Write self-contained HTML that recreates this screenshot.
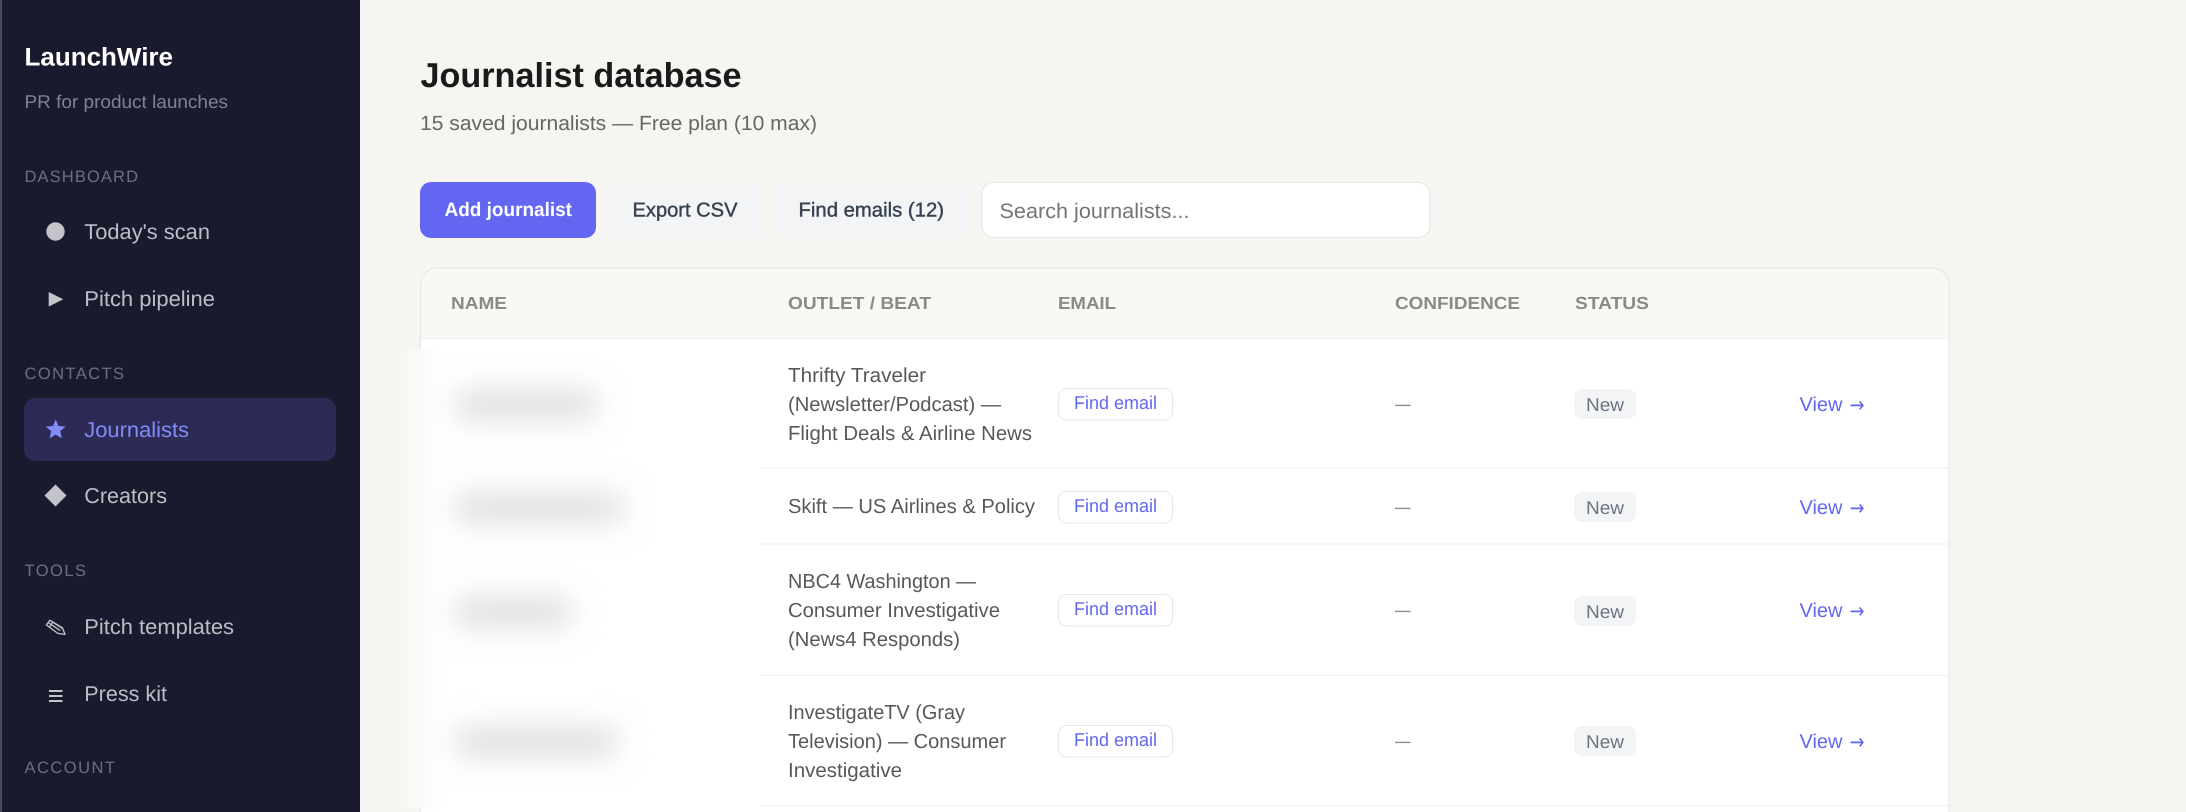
<!DOCTYPE html>
<html lang="en">
<head>
<meta charset="utf-8">
<title>Journalist database — LaunchWire</title>
<style>
html,body{margin:0;padding:0;width:2186px;height:812px;overflow:hidden;background:#f5f5f1}
svg{display:block;position:absolute;left:0;top:0}
text{font-family:"Liberation Sans",Arial,sans-serif;text-rendering:geometricPrecision;white-space:pre}
.nav{font-size:21.5px;fill:#bdbdc4}
.sec{font-size:16.5px;fill:#6f6f7c}
.th{font-size:17.5px;font-weight:700;fill:#8a8a88}
.td{font-size:20.3px;fill:#585858}
.fe{font-size:18.5px;fill:#6366f1}
.bd{font-size:18.5px;fill:#6b7280}
.vw{font-size:20px;fill:#6366f1}
.ar{font-size:21px;fill:#6366f1;font-family:"DejaVu Sans",sans-serif}
.ds{font-size:20px;fill:#8a8a8a}
.bt{font-size:20px;fill:#374151;stroke:#374151;stroke-width:.4}
.pill{fill:#fff;stroke:#e8e8e8;stroke-width:1.1}
.bdg{fill:#f3f4f6}
</style>
</head>
<body>
<svg width="2186" height="812" viewBox="0 0 2186 812" xmlns="http://www.w3.org/2000/svg">
<defs>
<filter id="b" x="-40%" y="-150%" width="180%" height="400%"><feGaussianBlur stdDeviation="15"/></filter>
<linearGradient id="fade" gradientUnits="userSpaceOnUse" x1="392" y1="0" x2="445" y2="0">
<stop offset="0" stop-color="#f5f5f1"/><stop offset="1" stop-color="#fff"/>
</linearGradient>
<clipPath id="cp"><rect x="370" y="350" width="390" height="459"/></clipPath>
</defs>

<!-- page -->
<rect width="2186" height="812" fill="#f5f5f1"/>

<!-- sidebar -->
<rect x="0" y="0" width="360" height="812" fill="#1a1a2e"/>
<rect x="0" y="0" width="2" height="812" fill="#4b4b5a"/>
<text x="24.5" y="65.5" font-size="25.5" font-weight="700" fill="#fff" textLength="148.5" lengthAdjust="spacingAndGlyphs">LaunchWire</text>
<text x="24.5" y="108" font-size="18.5" fill="#82828e" textLength="203.5" lengthAdjust="spacingAndGlyphs">PR for product launches</text>

<text class="sec" x="24.5" y="182" textLength="113.5" lengthAdjust="spacing">DASHBOARD</text>
<circle cx="55.5" cy="231.5" r="9.2" fill="#c3c3ca"/>
<text class="nav" x="84.3" y="239" textLength="125.7" lengthAdjust="spacingAndGlyphs">Today's scan</text>
<path d="M48.7 292 L63.3 299.2 L48.7 306.6 Z" fill="#c3c3ca"/>
<text class="nav" x="84.3" y="306" textLength="130.7" lengthAdjust="spacingAndGlyphs">Pitch pipeline</text>

<text class="sec" x="24.5" y="379" textLength="99.5" lengthAdjust="spacing">CONTACTS</text>
<rect x="24" y="398" width="312" height="63" rx="12" fill="#2d2b55"/>
<path d="M55.7 419.5 L58.5 426 L65.6 426.6 L60.2 431.3 L61.9 438.4 L55.7 434.6 L49.5 438.4 L51.2 431.3 L45.8 426.6 L52.9 426 Z" fill="#818cf8"/>
<text x="84.3" y="437" font-size="21.5" fill="#818cf8" textLength="104.7" lengthAdjust="spacingAndGlyphs">Journalists</text>
<path d="M55.5 484.5 L66.5 495.5 L55.5 506.5 L44.5 495.5 Z" fill="#c3c3ca"/>
<text class="nav" x="84.3" y="503" textLength="82.7" lengthAdjust="spacingAndGlyphs">Creators</text>

<text class="sec" x="24.5" y="576" textLength="61.5" lengthAdjust="spacing">TOOLS</text>
<g fill="none" stroke="#c3c3ca" stroke-width="1.3" stroke-linejoin="round">
<path d="M46.4 625 L49.8 620.2 L62.4 627.8 L65 634.4 L57.8 633.4 Z"/>
<path d="M48.2 622.6 L60.2 630.6 M51.8 621.4 L63 628.8 M49.6 626.8 L52.6 622.2"/>
</g>
<text class="nav" x="84.3" y="634" textLength="149.7" lengthAdjust="spacingAndGlyphs">Pitch templates</text>
<path d="M49 691 H62.5 M49 696 H62.5 M49 701 H62.5" stroke="#c3c3ca" stroke-width="2" fill="none"/>
<text class="nav" x="84.3" y="701" textLength="82.7" lengthAdjust="spacingAndGlyphs">Press kit</text>
<text class="sec" x="24.5" y="773" textLength="90.5" lengthAdjust="spacing">ACCOUNT</text>

<!-- header -->
<text x="420.5" y="87" font-size="34.5" font-weight="700" fill="#1a1a1a" textLength="321" lengthAdjust="spacingAndGlyphs">Journalist database</text>
<text x="420" y="130" font-size="20.5" fill="#666" textLength="397" lengthAdjust="spacingAndGlyphs">15 saved journalists — Free plan (10 max)</text>

<!-- toolbar -->
<rect x="420" y="182" width="176" height="56" rx="11" fill="#6366f1"/>
<text x="444.5" y="216" font-size="19.5" font-weight="700" fill="#fff" textLength="127.5" lengthAdjust="spacingAndGlyphs">Add journalist</text>
<rect x="610" y="182" width="152" height="56" rx="11" fill="#f3f4f6"/>
<text class="bt" x="632.5" y="216.5" textLength="105" lengthAdjust="spacingAndGlyphs">Export CSV</text>
<rect x="775" y="182" width="192" height="56" rx="11" fill="#f3f4f6"/>
<text class="bt" x="798.5" y="216.5" textLength="145.5" lengthAdjust="spacingAndGlyphs">Find emails (12)</text>
<rect x="981.5" y="182.5" width="448.5" height="55" rx="12" fill="#fff" stroke="#e6e6e6" stroke-width="1.1"/>
<text x="999.5" y="218" font-size="21" fill="#757575" textLength="190" lengthAdjust="spacingAndGlyphs">Search journalists...</text>

<!-- table card -->
<path d="M421 338 V285 a16.5 16.5 0 0 1 16.5 -16.5 H1932 a16.5 16.5 0 0 1 16.5 16.5 V338 Z" fill="#f8f8f4"/>
<rect x="421" y="338" width="1527.5" height="474" fill="#fff"/>
<path d="M420.5 812 V285 a17 17 0 0 1 17 -17 H1932 a17 17 0 0 1 17 17 V812" fill="none" stroke="#e8e8e4" stroke-width="1.2"/>
<path d="M421 338.5 H1948.5" stroke="#f0f0ee" stroke-width="1"/>

<text class="th" x="451" y="309" textLength="56" lengthAdjust="spacingAndGlyphs">NAME</text>
<text class="th" x="788" y="309" textLength="143" lengthAdjust="spacingAndGlyphs">OUTLET / BEAT</text>
<text class="th" x="1058" y="309" textLength="58" lengthAdjust="spacingAndGlyphs">EMAIL</text>
<text class="th" x="1395" y="309" textLength="125" lengthAdjust="spacingAndGlyphs">CONFIDENCE</text>
<text class="th" x="1575" y="309" textLength="74" lengthAdjust="spacingAndGlyphs">STATUS</text>

<!-- row separators -->
<path d="M421 468 H1948.5 M421 544 H1948.5 M421 675.5 H1948.5 M421 805.5 H1948.5" stroke="#f1f1f1" stroke-width="1.2"/>

<!-- row 1 -->
<text class="td" x="788" y="381.8" textLength="138" lengthAdjust="spacingAndGlyphs">Thrifty Traveler</text>
<text class="td" x="788" y="410.8" textLength="213" lengthAdjust="spacingAndGlyphs">(Newsletter/Podcast) —</text>
<text class="td" x="788" y="439.8" textLength="244" lengthAdjust="spacingAndGlyphs">Flight Deals &amp; Airline News</text>
<rect class="pill" x="1058.5" y="388.5" width="114" height="31.5" rx="8"/>
<text class="fe" x="1074" y="409" textLength="83" lengthAdjust="spacingAndGlyphs">Find email</text>
<text class="ds" x="1395" y="410.5" textLength="15.5" lengthAdjust="spacingAndGlyphs">—</text>
<rect class="bdg" x="1574" y="389" width="62" height="30" rx="8"/>
<text class="bd" x="1586" y="411" textLength="38" lengthAdjust="spacingAndGlyphs">New</text>
<text class="vw" x="1799.5" y="411" textLength="43" lengthAdjust="spacingAndGlyphs">View</text>
<text class="ar" x="1849.5" y="412" textLength="15" lengthAdjust="spacingAndGlyphs">→</text>

<!-- row 2 -->
<text class="td" x="788" y="513" textLength="247" lengthAdjust="spacingAndGlyphs">Skift — US Airlines &amp; Policy</text>
<rect class="pill" x="1058.5" y="491.5" width="114" height="31.5" rx="8"/>
<text class="fe" x="1074" y="512" textLength="83" lengthAdjust="spacingAndGlyphs">Find email</text>
<text class="ds" x="1395" y="513.5" textLength="15.5" lengthAdjust="spacingAndGlyphs">—</text>
<rect class="bdg" x="1574" y="492" width="62" height="30" rx="8"/>
<text class="bd" x="1586" y="514" textLength="38" lengthAdjust="spacingAndGlyphs">New</text>
<text class="vw" x="1799.5" y="514" textLength="43" lengthAdjust="spacingAndGlyphs">View</text>
<text class="ar" x="1849.5" y="515" textLength="15" lengthAdjust="spacingAndGlyphs">→</text>

<!-- row 3 -->
<text class="td" x="788" y="587.8" textLength="188" lengthAdjust="spacingAndGlyphs">NBC4 Washington —</text>
<text class="td" x="788" y="616.8" textLength="212" lengthAdjust="spacingAndGlyphs">Consumer Investigative</text>
<text class="td" x="788" y="645.8" textLength="172" lengthAdjust="spacingAndGlyphs">(News4 Responds)</text>
<rect class="pill" x="1058.5" y="594.5" width="114" height="31.5" rx="8"/>
<text class="fe" x="1074" y="615" textLength="83" lengthAdjust="spacingAndGlyphs">Find email</text>
<text class="ds" x="1395" y="616.5" textLength="15.5" lengthAdjust="spacingAndGlyphs">—</text>
<rect class="bdg" x="1574" y="596" width="62" height="30" rx="8"/>
<text class="bd" x="1586" y="618" textLength="38" lengthAdjust="spacingAndGlyphs">New</text>
<text class="vw" x="1799.5" y="617" textLength="43" lengthAdjust="spacingAndGlyphs">View</text>
<text class="ar" x="1849.5" y="618" textLength="15" lengthAdjust="spacingAndGlyphs">→</text>

<!-- row 4 -->
<text class="td" x="788" y="718.8" textLength="177" lengthAdjust="spacingAndGlyphs">InvestigateTV (Gray</text>
<text class="td" x="788" y="747.8" textLength="218" lengthAdjust="spacingAndGlyphs">Television) — Consumer</text>
<text class="td" x="788" y="776.8" textLength="114" lengthAdjust="spacingAndGlyphs">Investigative</text>
<rect class="pill" x="1058.5" y="725.5" width="114" height="31.5" rx="8"/>
<text class="fe" x="1074" y="746" textLength="83" lengthAdjust="spacingAndGlyphs">Find email</text>
<text class="ds" x="1395" y="747.5" textLength="15.5" lengthAdjust="spacingAndGlyphs">—</text>
<rect class="bdg" x="1574" y="726" width="62" height="30" rx="8"/>
<text class="bd" x="1586" y="748" textLength="38" lengthAdjust="spacingAndGlyphs">New</text>
<text class="vw" x="1799.5" y="748" textLength="43" lengthAdjust="spacingAndGlyphs">View</text>
<text class="ar" x="1849.5" y="749" textLength="15" lengthAdjust="spacingAndGlyphs">→</text>

<!-- blurred names -->
<g clip-path="url(#cp)">
<rect x="370" y="350" width="390" height="459" fill="#fff"/>
<rect x="370" y="350" width="76" height="459" fill="url(#fade)"/>
<g fill="#dadada" filter="url(#b)">
<rect x="456" y="392" width="140" height="26"/>
<rect x="456" y="495" width="166" height="26"/>
<rect x="456" y="599" width="114" height="26"/>
<rect x="456" y="729" width="160" height="26"/>
</g>
</g>
</svg>
</body>
</html>
